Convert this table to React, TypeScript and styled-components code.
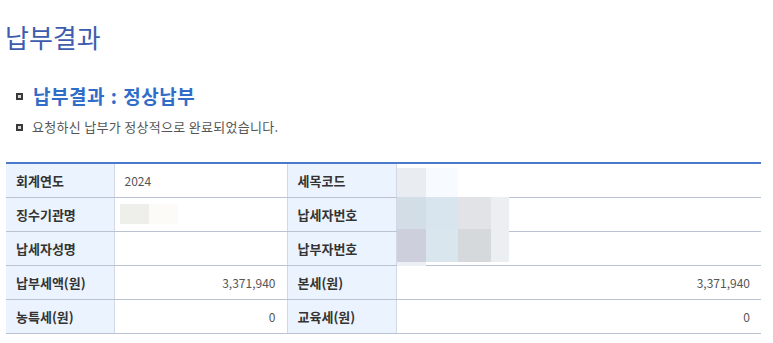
import React from 'react';
import styled, { createGlobalStyle } from 'styled-components';

const GlobalStyle = createGlobalStyle`
  body {
    margin: 0;
    background: #fff;
    font-family: "Noto Sans CJK KR", "Noto Sans", sans-serif;
  }
`;

type Row = [string, string, string, string];

const ROWS: Row[] = [
  ['회계연도', '2024', '세목코드', ''],
  ['징수기관명', '', '납세자번호', ''],
  ['납세자성명', '', '납부자번호', ''],
  ['납부세액(원)', '3,371,940', '본세(원)', '3,371,940'],
  ['농특세(원)', '0', '교육세(원)', '0'],
];

// blurred (pixelated) blocks over personal data: [left, top, width, height, colour]
const MOSAIC: [number, number, number, number, string][] = [
  [114, 42, 29, 20, '#eeefeb'],
  [143, 42, 29, 20, '#fdfbf8'],
  [391, 6, 29, 29, '#e9ecf0'],
  [420, 6, 32, 29, '#f7fbff'],
  [391, 35, 29, 32, '#d3dde6'],
  [420, 35, 32, 32, '#d9e5ee'],
  [452, 35, 33, 32, '#e2e3e6'],
  [485, 35, 18, 32, '#ebeff2'],
  [391, 67, 29, 33, '#cdcfdd'],
  [420, 67, 32, 33, '#dae6ee'],
  [452, 67, 33, 33, '#d6d9dc'],
  [485, 67, 18, 33, '#ebeff2'],
  [391, 100, 29, 4, '#eceff3'],
];

const App = () => {
  return (
    <>
      <GlobalStyle />
      <Page>
        <Title>납부결과</Title>
        <SectionHead>
          <Bullet />
          <span>납부결과 : 정상납부</span>
        </SectionHead>
        <Notice>
          <Bullet />
          <span>요청하신 납부가 정상적으로 완료되었습니다.</span>
        </Notice>
        <TableWrap>
          <ResultTable>
            <colgroup>
              <col style={{ width: 108 }} />
              <col style={{ width: 173 }} />
              <col style={{ width: 109 }} />
              <col />
            </colgroup>
            <tbody>
              {ROWS.map((r) => (
                <tr key={r[0]}>
                  <Label>{r[0]}</Label>
                  <Value $num={r[1] !== '2024'}>{r[1]}</Value>
                  <Label>{r[2]}</Label>
                  <Value $num>{r[3]}</Value>
                </tr>
              ))}
            </tbody>
          </ResultTable>
          {MOSAIC.map(([l, t, w, h, c], i) => (
            <Pixel key={i} style={{ left: l, top: t, width: w, height: h, background: c }} />
          ))}
        </TableWrap>
      </Page>
    </>
  );
};

const Page = styled.div`
  padding: 22px 12px 0 6px;
`;

const Title = styled.h1`
  margin: 0 0 0 -1px;
  font-size: 26px;
  line-height: 30px;
  font-weight: 400;
  color: #3e5cad;
`;

const Bullet = styled.i`
  display: block;
  flex: none;
  width: 7px;
  height: 7px;
  box-sizing: border-box;
  border: 2px solid #3a3a3a;
  background: #d8d8d8;
`;

const SectionHead = styled.h2`
  display: flex;
  align-items: center;
  gap: 10px;
  margin: 32px 0 0 10px;
  font-size: 19px;
  line-height: 24px;
  font-weight: 700;
  color: #2f6dc9;
  letter-spacing: 0.5px;
  word-spacing: 1px;
`;

const Notice = styled.p`
  display: flex;
  align-items: center;
  gap: 9px;
  margin: 11px 0 0 10px;
  font-size: 13px;
  line-height: 16px;
  color: #555;
  letter-spacing: 0.3px;
`;

const TableWrap = styled.div`
  position: relative;
  width: 755px;
  margin-top: 27px;
`;

const ResultTable = styled.table`
  width: 100%;
  border-collapse: collapse;
  table-layout: fixed;
  border-top: 2px solid #4a7acb;
  font-size: 12px;

  td {
    height: 33px;
    padding: 0 11px 0 10px;
    border-bottom: 1px solid #b9c3d1;
    border-left: 1px solid #d2d9e4;
  }
  td:first-child {
    border-left: none;
  }
`;

const Label = styled.td`
  background: #ebf3fe;
  color: #333;
  font-size: 13px;
  font-weight: 700;
`;

const Value = styled.td<{ $num?: boolean }>`
  color: #555;
  text-align: ${(p) => (p.$num ? 'right' : 'left')};
`;

const Pixel = styled.div`
  position: absolute;
`;

export default App;
